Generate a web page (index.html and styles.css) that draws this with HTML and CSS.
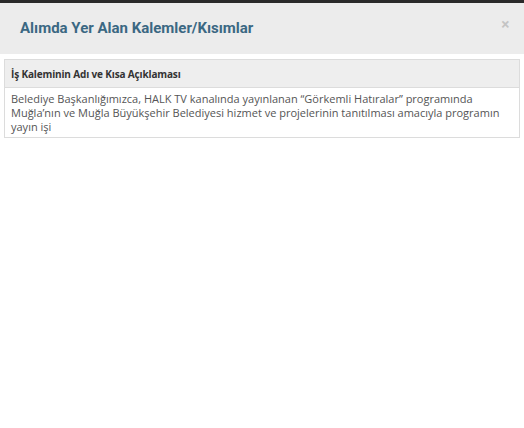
FILE: index.html
```html
<!DOCTYPE html>
<html lang="tr">
<head>
<meta charset="utf-8">
<link rel="stylesheet" href="styles.css">
</head>
<body>
<div class="topbar"></div>
<div class="modal-header">
  <h4 class="modal-title">Alımda Yer Alan Kalemler/Kısımlar</h4>
  <span class="close">×</span>
</div>
<div class="modal-body">
  <table class="items">
    <thead>
      <tr><th>İş Kaleminin Adı ve Kısa Açıklaması</th></tr>
    </thead>
    <tbody>
      <tr><td>Belediye Başkanlığımızca, HALK TV kanalında yayınlanan “Görkemli Hatıralar” programında Muğla’nın ve Muğla Büyükşehir Belediyesi hizmet ve projelerinin tanıtılması amacıyla programın yayın işi</td></tr>
    </tbody>
  </table>
</div>
</body>
</html>
```
FILE: styles.css
```css
html, body { margin: 0; padding: 0; background: #fff; }
body { font-family: "Open Sans", "DejaVu Sans", sans-serif; width: 524px; height: 428px; overflow: hidden; }
.topbar { height: 3px; background: #2a2a2a; }
.modal-header {
  background: #ececec;
  height: 51px;
  display: flex;
  align-items: center;
  justify-content: space-between;
  padding: 0 14px 0 20px;
  box-sizing: border-box;
}
.modal-title {
  margin: 0 0 2px 0;
  font-family: Roboto, "Open Sans", sans-serif;
  font-size: 15px;
  font-weight: 700;
  color: #3b6883;
}
.close {
  color: #c4c4c4;
  font-size: 16px;
  font-weight: 700;
  align-self: flex-start;
  margin-top: 13px;
  line-height: 16px;
}
.modal-body { padding: 5px 4px 0 4px; }
.items {
  width: 100%;
  border-collapse: collapse;
  border: 1px solid #dcdcdc;
  font-size: 11px;
  color: #555;
}
.items th {
  background: #eeeeee;
  text-align: left;
  font-weight: 700;
  padding: 7px 6px 6px 6px;
  border-bottom: 1px solid #dcdcdc;
  font-size: 10px;
  letter-spacing: -0.15px;
  color: #333;
}
.items td {
  padding: 4px 6px 3px 6px;
  line-height: 14px;
  color: #555;
}
```
